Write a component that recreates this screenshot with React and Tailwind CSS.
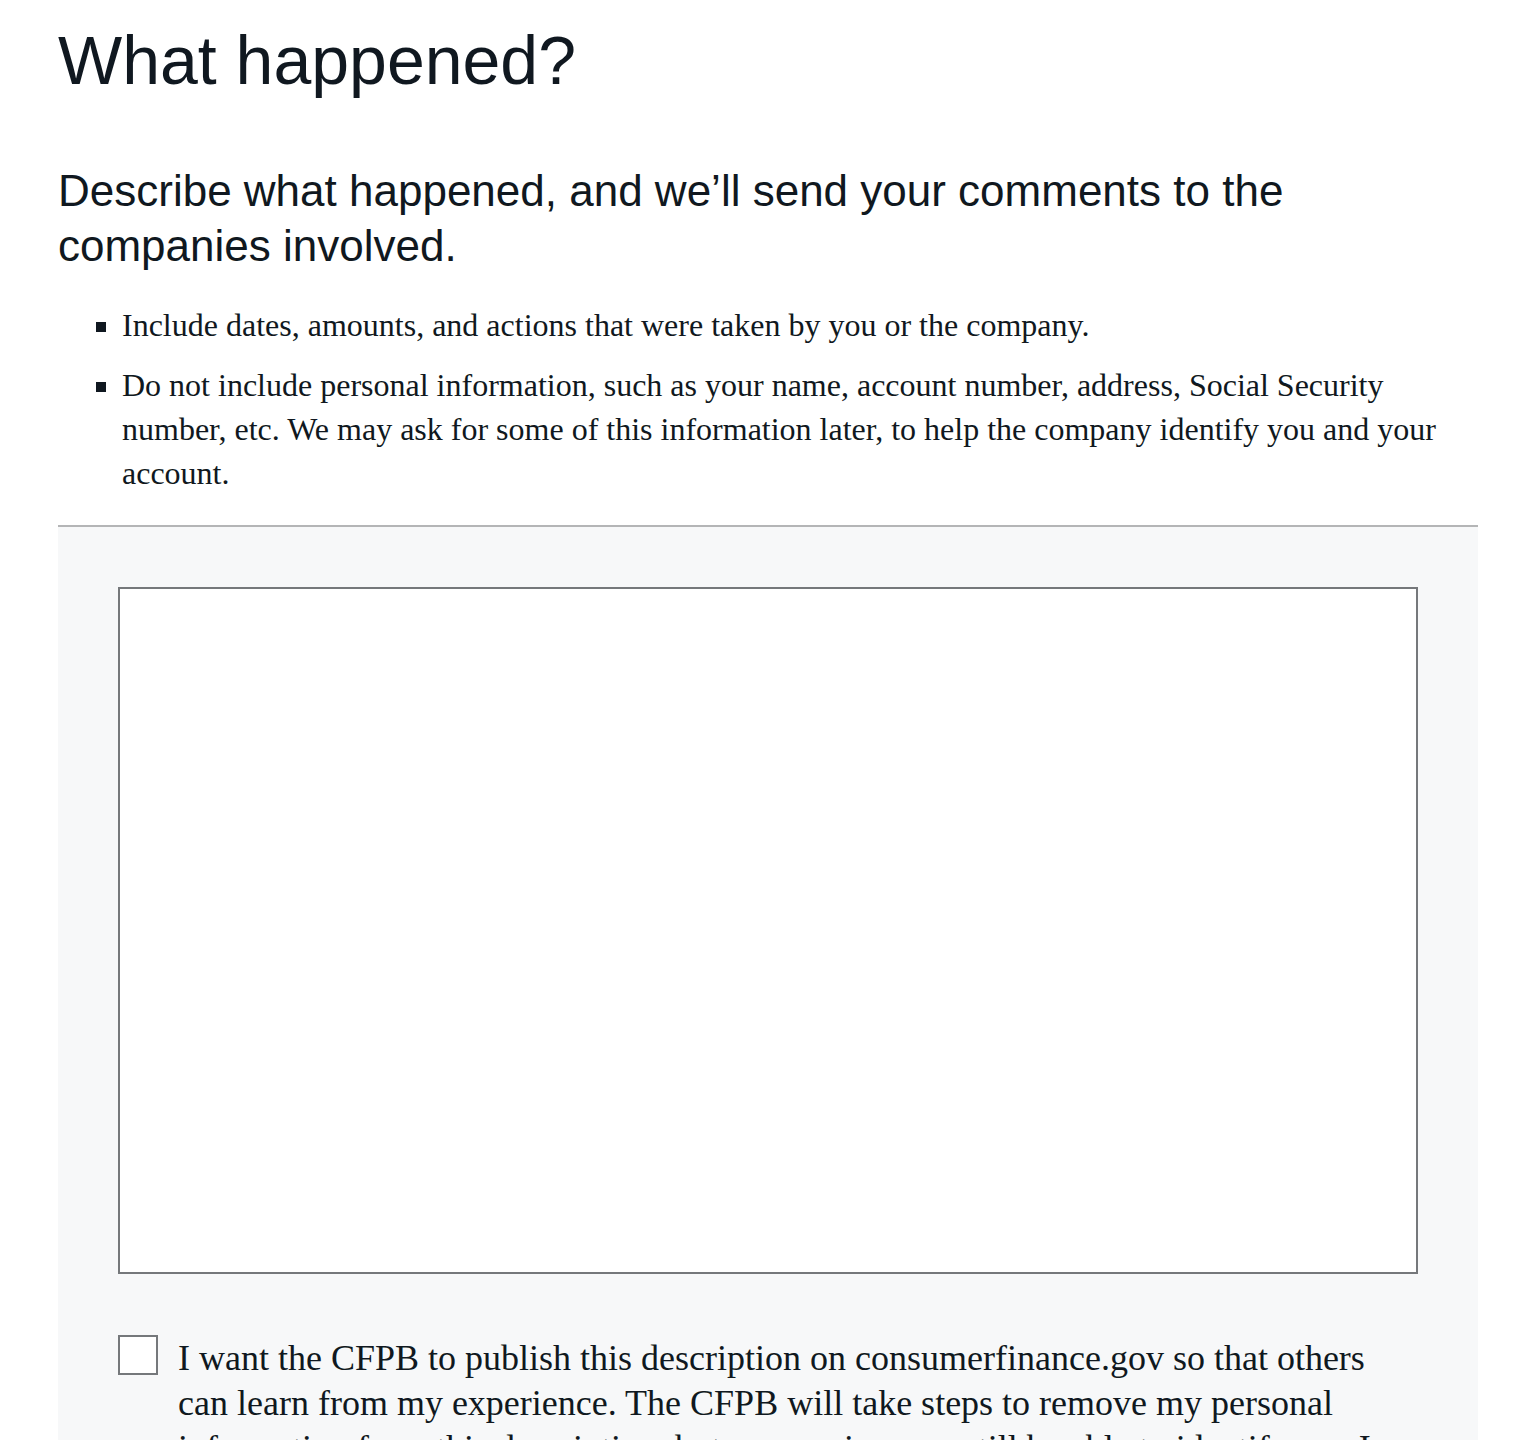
export default function App() {
  return (
    <div className="min-h-[1440px] bg-white pl-[58px] pr-[40px] text-[#101820]">
      <h1 className="pt-[20px] text-[68px] leading-[80px] font-normal" style={{ fontFamily: '"Liberation Sans", Arial, sans-serif' }}>
        What happened?
      </h1>
      <p className="mt-[63px] text-[44px] leading-[55px]" style={{ fontFamily: '"Liberation Sans", Arial, sans-serif' }}>
        Describe what happened, and we’ll send your comments to the companies involved.
      </p>
      <ul className="mt-[30px] list-[square] pl-[64px] text-[32px] leading-[44px]" style={{ fontFamily: '"Liberation Serif", "Times New Roman", serif' }}>
        <li className="mb-[16px]">Include dates, amounts, and actions that were taken by you or the company.</li>
        <li>
          Do not include personal information, such as your name, account number, address, Social Security number, etc. We may ask for some of this information later, to help the company identify you and your account.
        </li>
      </ul>
      <div className="mt-[30px] border-t-2 border-[#b4b5b6] bg-[#f7f8f9] px-[60px] pt-[60px] pb-[60px]">
        <textarea className="block h-[687px] w-full resize-none border-2 border-[#75787b] bg-white outline-none" aria-label="What happened" />
        <label className="mt-[60px] flex items-start gap-[20px]">
          <span className="mt-[1px] block h-[40px] w-[40px] shrink-0 border-2 border-[#75787b] bg-white" />
          <span className="pt-[2px] text-[36px] leading-[45px] pr-[40px]" style={{ fontFamily: '"Liberation Serif", "Times New Roman", serif' }}>
            I want the CFPB to publish this description on consumerfinance.gov so that others can learn from my experience. The CFPB will take steps to remove my personal information from this description, but companies may still be able to identify me. I understand that this description will be published publicly.
          </span>
        </label>
      </div>
    </div>
  );
}
